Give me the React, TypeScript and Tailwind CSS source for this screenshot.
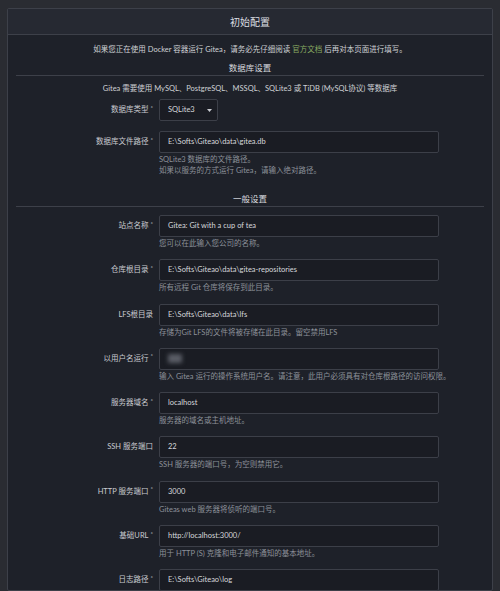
import React from "react";

type Field = {
  label: string;
  required?: boolean;
  value: string;
  help: string[];
  blurred?: boolean;
};

const general: Field[] = [
  { label: "站点名称", required: true, value: "Gitea: Git with a cup of tea", help: ["您可以在此输入您公司的名称。"] },
  { label: "仓库根目录", required: true, value: "E:\\Softs\\Giteao\\data\\gitea-repositories", help: ["所有远程 Git 仓库将保存到此目录。"] },
  { label: "LFS根目录", value: "E:\\Softs\\Giteao\\data\\lfs", help: ["存储为Git LFS的文件将被存储在此目录。留空禁用LFS"] },
  { label: "以用户名运行", required: true, value: "", blurred: true, help: ["输入 Gitea 运行的操作系统用户名。请注意，此用户必须具有对仓库根路径的访问权限。"] },
  { label: "服务器域名", required: true, value: "localhost", help: ["服务器的域名或主机地址。"] },
  { label: "SSH 服务端口", value: "22", help: ["SSH 服务器的端口号，为空则禁用它。"] },
  { label: "HTTP 服务端口", required: true, value: "3000", help: ["Giteas web 服务器将侦听的端口号。"] },
  { label: "基础URL", required: true, value: "http://localhost:3000/", help: ["用于 HTTP (S) 克隆和电子邮件通知的基本地址。"] },
  { label: "日志路径", required: true, value: "E:\\Softs\\Giteao\\log", help: [] },
];

function Label({ text, required }: { text: string; required?: boolean }) {
  return (
    <div className="w-[138px] shrink-0 flex justify-end items-center h-[22px] pr-[1px] text-[#c9cbd0]">
      <span>{text}</span>
      {required && <span className="ml-[2px] -mt-[5px] text-[6px] text-[#c9cbd0]">*</span>}
    </div>
  );
}

function FieldRow({ f }: { f: Field }) {
  return (
    <div className="flex mb-[10.3px]">
      <Label text={f.label} required={f.required} />
      <div className="ml-[5px] w-[280px]">
        <div className="h-[22px] flex items-center pl-[8px] bg-[#1a1c23] border border-[#3c3f48] rounded-[2px] text-[#d6d8dc]">
          {f.blurred ? <span className="w-[14px] h-[9px] bg-[#5a5d66] blur-[2px] rounded-[1px]" /> : f.value}
        </div>
        {f.help.map((h) => (
          <div key={h} className="mt-[1px] leading-[11px] text-[#8d919a] whitespace-nowrap">
            {h}
          </div>
        ))}
      </div>
    </div>
  );
}

export default function App() {
  return (
    <div
      className="w-[500px] h-[591px] overflow-hidden bg-[#2a2c32] pt-[8px] px-[7px] text-[7.5px] leading-[12px]"
      style={{ fontFamily: 'Lato, "Noto Sans CJK SC", sans-serif' }}
    >
      <div className="h-full border border-[#3d4049] rounded-[2px] bg-[#1e2129]">
        <div className="h-[26px] flex items-center justify-center bg-[#262932] border-b border-[#3d4049] text-[10px] text-[#dcdee2]">
          初始配置
        </div>

        <div className="px-[8px] pt-[9px]">
          <p className="text-center text-[#cfd1d5]">
            如果您正在使用 Docker 容器运行 Gitea，请务必先仔细阅读 <span className="text-[#8aab62]">官方文档</span> 后再对本页面进行填写。
          </p>

          <h4 className="mt-[6px] text-center text-[8.5px] text-[#d8dadf] border-b border-[#3d4049] pb-[1px] leading-[12px]">
            数据库设置
          </h4>
          <p className="mt-[7px] text-center text-[#cfd1d5]">
            Gitea 需要使用 MySQL、PostgreSQL、MSSQL、SQLite3 或 TiDB (MySQL协议) 等数据库
          </p>

          <div className="flex mt-[4px] mb-[10px]">
            <Label text="数据库类型" required />
            <div className="ml-[5px] w-[59px] h-[22px] flex items-center justify-between pl-[8px] pr-[5px] bg-[#1a1c23] border border-[#3c3f48] rounded-[2px] text-[#d6d8dc]">
              <span>SQLite3</span>
              <svg width="5" height="3" viewBox="0 0 5 3">
                <polygon points="0,0 5,0 2.5,3" fill="#c9cbd0" />
              </svg>
            </div>
          </div>

          <div className="flex">
            <Label text="数据库文件路径" required />
            <div className="ml-[5px] w-[280px]">
              <div className="h-[22px] flex items-center pl-[8px] bg-[#1a1c23] border border-[#3c3f48] rounded-[2px] text-[#d6d8dc]">
                E:\Softs\Giteao\data\gitea.db
              </div>
              <div className="mt-[1px] leading-[11px] text-[#8d919a]">SQLite3 数据库的文件路径。</div>
              <div className="leading-[11px] text-[#8d919a]">如果以服务的方式运行 Gitea，请输入绝对路径。</div>
            </div>
          </div>

          <h4 className="mt-[17px] text-center text-[8.5px] text-[#d8dadf] border-b border-[#3d4049] pb-[1px] leading-[12px]">
            一般设置
          </h4>

          <div className="mt-[8px]">
            {general.map((f) => (
              <FieldRow key={f.label} f={f} />
            ))}
          </div>
        </div>
      </div>
    </div>
  );
}
